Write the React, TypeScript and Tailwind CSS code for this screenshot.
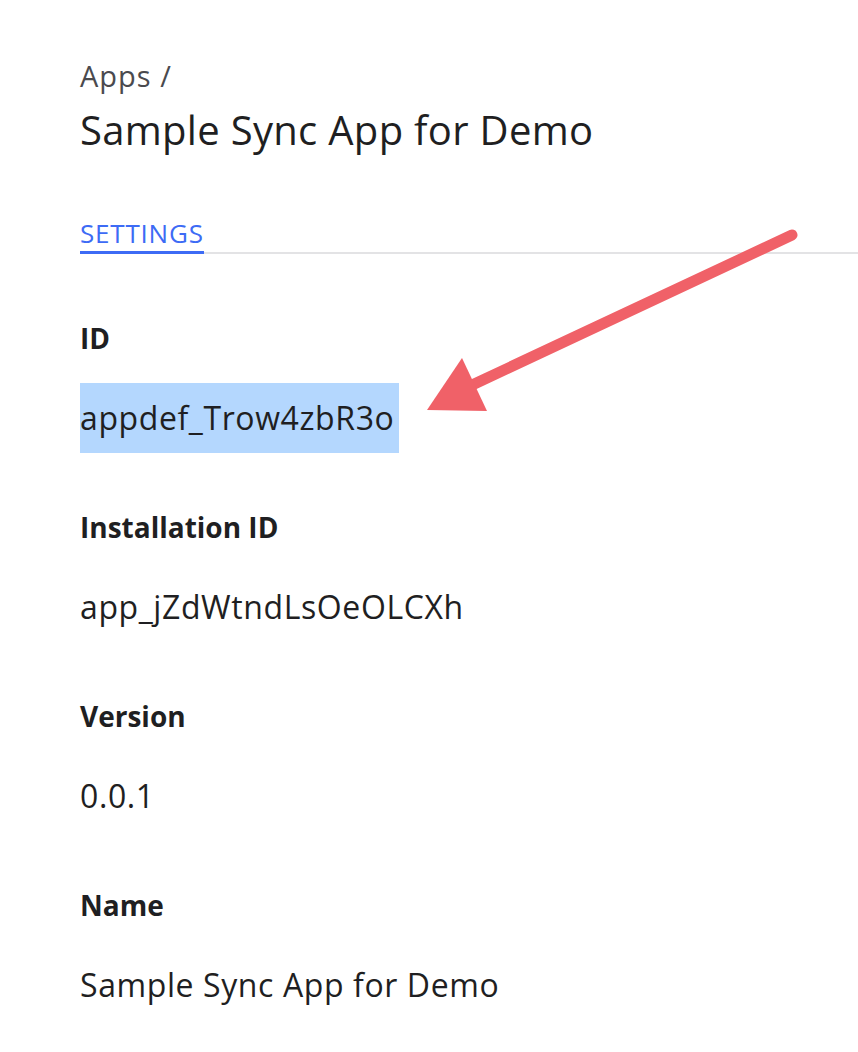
import React from "react";

const fields = [
  { label: "ID", value: "appdef_Trow4zbR3o", selected: true },
  { label: "Installation ID", value: "app_jZdWtndLsOeOLCXh" },
  { label: "Version", value: "0.0.1" },
  { label: "Name", value: "Sample Sync App for Demo" },
];

export default function App() {
  return (
    <div
      className="relative min-h-[1052px] w-[858px] overflow-hidden bg-white pl-[80px] text-[#1f1f22]"
      style={{ fontFamily: "'Open Sans', Lato, sans-serif" }}
    >
      {/* Breadcrumb + title */}
      <div className="pt-[57px]">
        <div className="text-[29px] leading-[38px] tracking-[1px] text-[#4a4a4e]">Apps /</div>
        <h1 className="mt-[10px] text-[40px] leading-[50px] tracking-[0.3px] text-[#1f1f22]">
          Sample Sync App for Demo
        </h1>
      </div>

      {/* Tabs */}
      <div className="mt-[63px] flex border-b-2 border-[#e3e3e5]">
        <div className="-mb-[2px] border-b-[3px] border-[#3d6bf5] pb-[3px] text-[26px] leading-[30px] tracking-[0.8px] text-[#3d6bf5]">
          SETTINGS
        </div>
      </div>

      {/* Fields */}
      <div className="mt-[67px] flex flex-col gap-[74px]">
        {fields.map((f) => (
          <div key={f.label} className="flex flex-col gap-[45px]">
            <div className="text-[28px] font-bold leading-[34px]">{f.label}</div>
            <div className="flex">
              <span
                className={
                  f.selected
                    ? "-my-[17px] bg-[#b4d7fe] py-[17px] pr-[5px] text-[32px] leading-[36px] tracking-[0.6px]"
                    : "text-[32px] leading-[36px] tracking-[0.6px]"
                }
              >
                {f.value}
              </span>
            </div>
          </div>
        ))}
      </div>

      {/* Annotation arrow */}
      <svg
        className="absolute left-0 top-0"
        width="858"
        height="1052"
        viewBox="0 0 858 1052"
      >
        <line
          x1="792"
          y1="235"
          x2="470"
          y2="386"
          stroke="#f06168"
          strokeWidth="11"
          strokeLinecap="round"
        />
        <polygon points="427,410 462,358 487,411" fill="#f06168" />
      </svg>
    </div>
  );
}
